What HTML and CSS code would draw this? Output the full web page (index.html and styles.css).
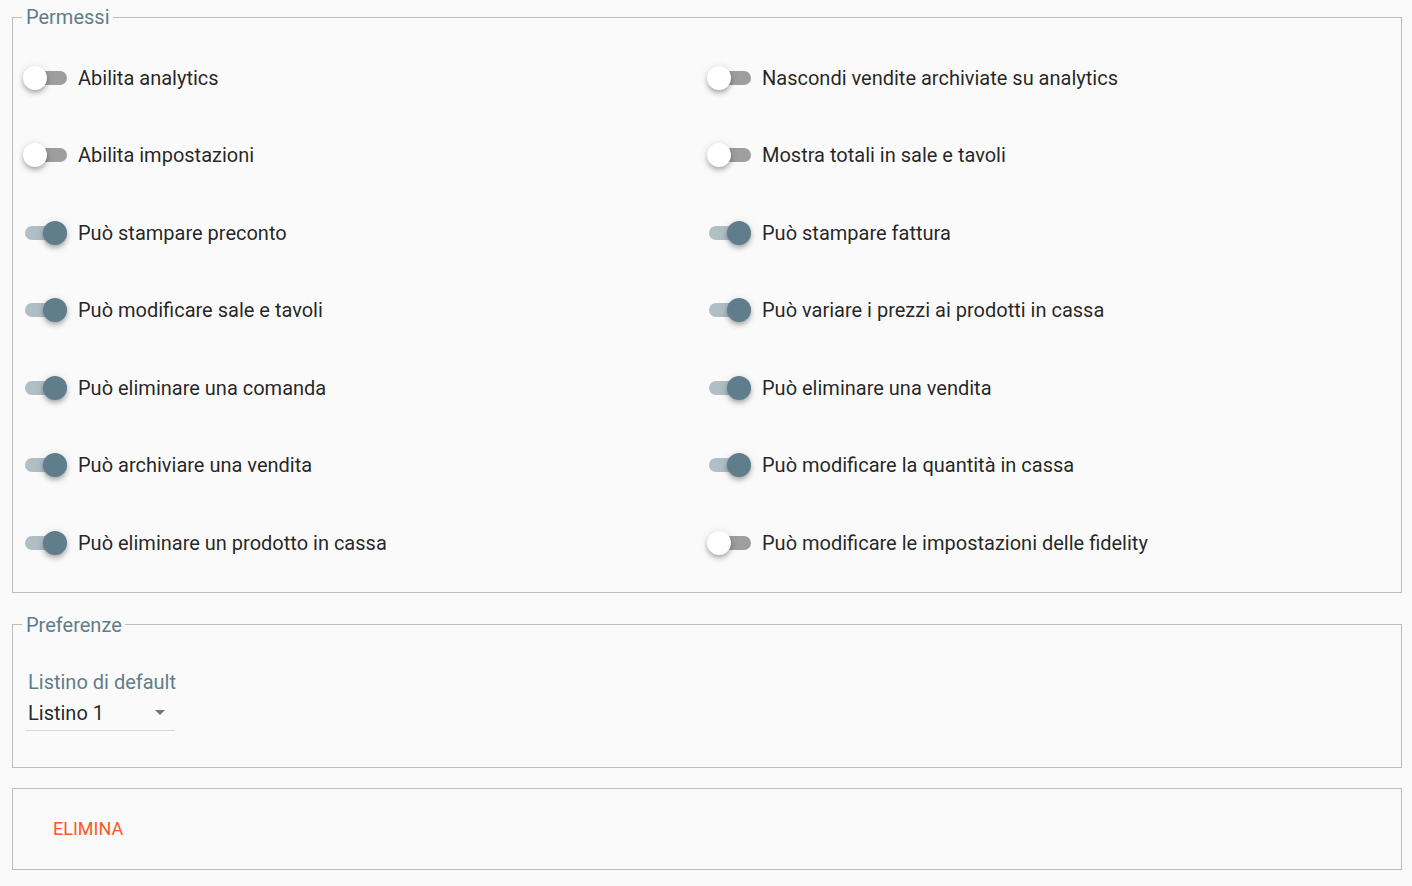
FILE: index.html
```html
<!DOCTYPE html>
<html lang="it">
<head>
    <meta charset="UTF-8">
    <title>Permessi</title>
    <link rel="stylesheet" href="styles.css">
</head>
<body>
    <fieldset class="box">
        <legend>Permessi</legend>
        <div class="grid">
            <label class="sw"><span class="track"><span class="thumb"></span></span>Abilita analytics</label>
            <label class="sw"><span class="track"><span class="thumb"></span></span>Nascondi vendite archiviate su analytics</label>
            <label class="sw"><span class="track"><span class="thumb"></span></span>Abilita impostazioni</label>
            <label class="sw"><span class="track"><span class="thumb"></span></span>Mostra totali in sale e tavoli</label>
            <label class="sw on"><span class="track"><span class="thumb"></span></span>Può stampare preconto</label>
            <label class="sw on"><span class="track"><span class="thumb"></span></span>Può stampare fattura</label>
            <label class="sw on"><span class="track"><span class="thumb"></span></span>Può modificare sale e tavoli</label>
            <label class="sw on"><span class="track"><span class="thumb"></span></span>Può variare i prezzi ai prodotti in cassa</label>
            <label class="sw on"><span class="track"><span class="thumb"></span></span>Può eliminare una comanda</label>
            <label class="sw on"><span class="track"><span class="thumb"></span></span>Può eliminare una vendita</label>
            <label class="sw on"><span class="track"><span class="thumb"></span></span>Può archiviare una vendita</label>
            <label class="sw on"><span class="track"><span class="thumb"></span></span>Può modificare la quantità in cassa</label>
            <label class="sw on"><span class="track"><span class="thumb"></span></span>Può eliminare un prodotto in cassa</label>
            <label class="sw"><span class="track"><span class="thumb"></span></span>Può modificare le impostazioni delle fidelity</label>
        </div>
    </fieldset>

    <fieldset class="box prefs">
        <legend>Preferenze</legend>
        <div class="field">
            <div class="field-label">Listino di default</div>
            <div class="select">
                <span>Listino 1</span>
                <span class="caret"></span>
            </div>
        </div>
    </fieldset>

    <div class="box actions">
        <button class="btn-del">Elimina</button>
    </div>
</body>
</html>
```

FILE: styles.css
```css
body {
    margin: 0;
    padding: 5px 10px 0 12px;
    background: #fafafa;
    font-family: Roboto, "Liberation Sans", sans-serif;
    color: rgba(0,0,0,.87);
}

.box {
    margin: 0;
    padding: 0;
    border: 1px solid #bdbdbd;
    min-width: 0;
}

legend {
    margin-left: 9px;
    padding: 0 3px 0 4px;
    font-size: 20px;
    line-height: 24px;
    color: #607d8b;
}

.grid {
    display: grid;
    grid-template-columns: 1fr 1fr;
    grid-auto-rows: 77.5px;
    padding: 10px 20px 10px 0;
}

.sw {
    display: flex;
    align-items: center;
    gap: 11px;
    padding-left: 11px;
    font-size: 20px;
    cursor: pointer;
}

.track {
    position: relative;
    width: 42px;
    height: 14px;
    margin-left: 1px;
    border-radius: 7px;
    background: #9e9e9e;
    flex-shrink: 0;
}

.thumb {
    position: absolute;
    top: -5px;
    left: -2px;
    width: 24px;
    height: 24px;
    border-radius: 50%;
    background: #ffffff;
    box-shadow: 0 2px 4px -1px rgba(0,0,0,.2), 0 4px 5px 0 rgba(0,0,0,.14), 0 1px 10px 0 rgba(0,0,0,.12);
}

.sw.on .track {
    background: #b0bec5;
}

.sw.on .thumb {
    left: 18px;
    background: #607d8b;
}

.prefs {
    margin-top: 20px;
    height: 153px;
}

.field {
    padding: 33px 0 0 14px;
}

.field-label {
    font-size: 20px;
    line-height: 24px;
    color: #607d8b;
    padding-left: 1px;
}

.select {
    display: flex;
    align-items: center;
    justify-content: space-between;
    width: 137px;
    margin-left: -1px;
    padding: 8px 10px 6px 2px;
    font-size: 20px;
    line-height: 22px;
    border-bottom: 1px solid #d6d6d6;
}

.caret {
    width: 0;
    height: 0;
    border-left: 5px solid transparent;
    border-right: 5px solid transparent;
    border-top: 5px solid #757575;
}

.actions {
    margin-top: 20px;
    height: 80px;
    display: flex;
    align-items: center;
    padding-left: 24px;
}

.btn-del {
    border: none;
    background: none;
    padding: 6px 16px;
    font-family: Roboto, "Liberation Sans", sans-serif;
    font-size: 18px;
    text-transform: uppercase;
    color: #ff5722;
    cursor: pointer;
}
```
